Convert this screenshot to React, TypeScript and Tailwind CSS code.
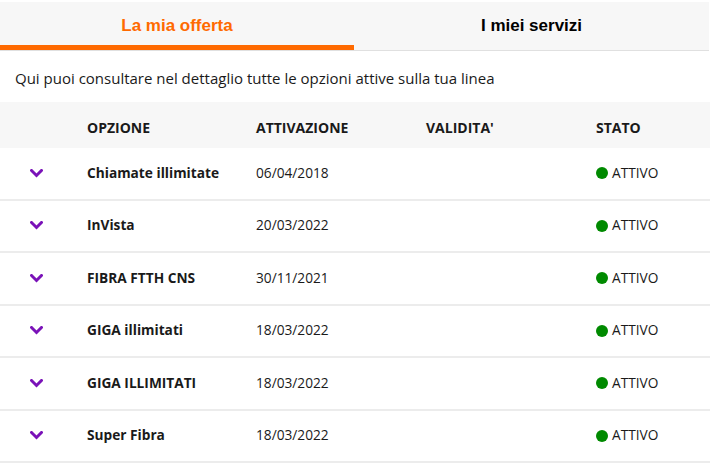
const rows = [
  { name: 'Chiamate illimitate', date: '06/04/2018' },
  { name: 'InVista', date: '20/03/2022' },
  { name: 'FIBRA FTTH CNS', date: '30/11/2021' },
  { name: 'GIGA illimitati', date: '18/03/2022' },
  { name: 'GIGA ILLIMITATI', date: '18/03/2022' },
  { name: 'Super Fibra', date: '18/03/2022' },
];

function Chevron() {
  return (
    <svg width="13" height="9" viewBox="0 0 13 9" className="ml-[30px]">
      <path d="M1.5 1.5 L6.5 6.5 L11.5 1.5" fill="none" stroke="#7a12b8" strokeWidth="3" strokeLinecap="square" />
    </svg>
  );
}

export default function App() {
  return (
    <div className="w-[710px] h-[466px] bg-white text-[#1a1a1a] overflow-hidden font-['Open_Sans',sans-serif]">
      {/* Tabs */}
      <div className="mt-[2px] mr-[1px] flex bg-[#f7f7f7] border-b border-[#e0e0e0] font-['Liberation_Sans',Arial,sans-serif] font-bold text-[17px]">
        <div className="w-[354px] h-[48px] flex items-center justify-center text-[#ff6a00] border-b-[5px] border-[#ff6a00] pt-[5px]">
          La mia offerta
        </div>
        <div className="flex-1 h-[48px] flex items-center justify-center text-black pt-[5px] pb-[5px]">
          I miei servizi
        </div>
      </div>

      <p className="pl-[15px] pt-[17px] h-[51px] text-[15px] leading-[20px]">
        Qui puoi consultare nel dettaglio tutte le opzioni attive sulla tua linea
      </p>

      {/* Table */}
      <div className="grid grid-cols-[87px_169px_170px_170px_1fr] h-[46px] pt-[5px] items-center bg-[#f7f7f7] text-[14px] font-bold">
        <div />
        <div>OPZIONE</div>
        <div>ATTIVAZIONE</div>
        <div>VALIDITA'</div>
        <div>STATO</div>
      </div>
      {rows.map((r) => (
        <div
          key={r.name}
          className="grid grid-cols-[87px_169px_170px_170px_1fr] box-border h-[52.5px] items-center border-b-2 border-[#ececec] text-[13.7px]"
        >
          <div className="flex items-center">
            <Chevron />
          </div>
          <div className="font-bold">{r.name}</div>
          <div>{r.date}</div>
          <div />
          <div className="flex items-center gap-[4px]">
            <span className="w-[12px] h-[12px] rounded-full bg-[#008a00]" />
            <span>ATTIVO</span>
          </div>
        </div>
      ))}
    </div>
  );
}
